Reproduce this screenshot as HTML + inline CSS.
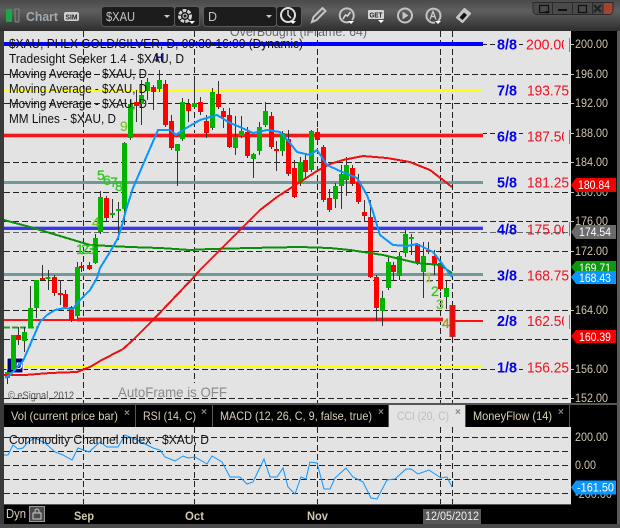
<!DOCTYPE html>
<html><head><meta charset="utf-8"><title>Chart</title>
<style>html,body{margin:0;padding:0;background:#333;width:620px;height:528px;overflow:hidden}svg{display:block}
text{font-family:"Liberation Sans",sans-serif}</style></head><body>
<svg width="620" height="528" viewBox="0 0 620 528" xmlns="http://www.w3.org/2000/svg">
<defs>
<linearGradient id="tb" x1="0" y1="0" x2="0" y2="1"><stop offset="0" stop-color="#4a4a4a"/><stop offset=".35" stop-color="#5e5e5e"/><stop offset="1" stop-color="#2e2e2e"/></linearGradient>
<clipPath id="lc"><rect x="520" y="30" width="44" height="340"/></clipPath>
</defs>
<rect width="620" height="528" fill="#3a3a3a"/>
<!-- main chart -->
<rect x="4" y="31" width="567" height="372" fill="#e3e3e3"/>
<text x="230" y="36" font-size="13" fill="#667" textLength="137" lengthAdjust="spacingAndGlyphs">OverBought (iFrame: 64)</text>
<!-- grid -->
<g stroke="#222" stroke-width="1" stroke-dasharray="6 3" fill="none" shape-rendering="crispEdges">
<path d="M4 44.500H571M4 74.500H571M4 103.500H571M4 133.500H571M4 162.500H571M4 192.500H571M4 221.500H571M4 251.500H571M4 280.500H571M4 310.500H571M4 339.500H571M4 369.500H571M4 398.500H571"/>
<path d="M4 232.500H571" stroke="#666"/>
<path d="M83.500 31V403M194.500 31V383M317.500 31V403M440.500 31V403M452.500 31V403"/>
</g>
<!-- label backgrounds masking grid -->
<g fill="#e3e3e3" shape-rendering="crispEdges">
<rect x="495" y="38" width="24" height="13"/><rect x="523" y="38" width="46" height="13"/>
<rect x="495" y="130" width="24" height="13"/><rect x="523" y="130" width="46" height="13"/>
<rect x="495" y="275" width="24" height="7"/><rect x="525" y="275" width="44" height="7"/>
<rect x="495" y="362" width="24" height="12"/><rect x="525" y="362" width="44" height="12"/>
</g>
<!-- level lines -->
<g shape-rendering="crispEdges">
<rect x="4" y="42" width="479" height="4" fill="#0000ff"/>
<rect x="4" y="89" width="478" height="2" fill="#ffff00"/>
<rect x="4" y="133" width="479" height="5" fill="#ff9a9a"/><rect x="4" y="134" width="479" height="3" fill="#f01818"/>
<rect x="4" y="181" width="479" height="3" fill="#6f9a9a"/>
<rect x="4" y="227" width="479" height="3" fill="#3838e8"/><rect x="4" y="226" width="479" height="1" fill="#a8a8e8"/>
<rect x="4" y="273" width="479" height="3" fill="#6f9a9a"/>
<rect x="4" y="319" width="73" height="2" fill="#ff1010"/>
<rect x="77" y="317" width="366" height="5" fill="#ff8a8a"/><rect x="77" y="318" width="366" height="3" fill="#f01818"/>
<rect x="455" y="320" width="28" height="2" fill="#ff1010"/>
<rect x="4" y="366" width="478" height="2" fill="#ffff00"/>
<path d="M4 327.500H37" stroke="#2a9a2a" stroke-width="2" stroke-dasharray="6 2" fill="none"/>
</g>
<!-- navy box -->
<rect x="7" y="358" width="16" height="15" fill="#000080" stroke="#fff" stroke-width="1"/>
<text x="16" y="369" font-size="9" font-weight="bold" fill="#fff">D</text>
<!-- wicks -->
<path shape-rendering="crispEdges" stroke="#333" stroke-width="1" fill="none" d="M7.500 370V384M18.500 327V345M24.500 327V352M30.500 286V328M36.500 280V318M42.500 265V280M48.500 270V290M54.500 275V296M60.500 280V305M65.500 290V307M71.500 306V322M77.500 262V318M81.500 262V272M89.500 262V270M95.500 234V264M100.500 191V234M106.500 196V222M112.500 199V218M118.500 202V240M124.500 142V225M130.500 100V140M136.500 90V122M141.500 80V125M147.500 78V100M153.500 85V110M159.500 70V92M165.500 80V127M171.500 115V150M177.500 144V186M182.500 98V141M188.500 99V122M194.500 80V107M200.500 97V115M206.500 115V138M212.500 88V130M218.500 81V109M223.500 108V128M229.500 108V148M235.500 116V155M241.500 116V138M247.500 127V158M253.500 153V178M259.500 122V155M265.500 102V127M271.500 112V149M276.500 141V171M282.500 131V156M288.500 130V176M294.500 160V198M300.500 157V186M305.500 155V178M311.500 130V172M317.500 128V143M323.500 145V202M329.500 189V212M335.500 183V208M341.500 165V209M346.500 157V196M352.500 165V186M358.500 174V204M364.500 200V222M370.500 200V278M376.500 275V321M382.500 291V326M388.500 256V290M393.500 262V280M399.500 252V280M405.500 230V257M411.500 234V255M417.500 243V265M423.500 242V298M428.500 242V254M434.500 250V275M440.500 260V291M446.500 281V309"/>
<!-- green bodies -->
<path shape-rendering="crispEdges" stroke="#00b400" stroke-width="5" fill="none" d="M7.500 372V378M13.500 335V370M24.500 332V341M30.500 308V328M36.500 280V308M48 277V279M77.500 267V316M95.500 238V263M100.500 197V232M112.500 213V215M118.500 209V211M124.500 143V209M130.500 104V138M141.500 95V104M147.500 82V91M159.500 80V89M177.500 144V151M182.500 102V139M194.500 103V107M212.500 92V128M235.500 137V148M241.500 131V136M253.500 154V159M259.500 127V151M265.500 111V125M282.500 133V151M300.500 162V183M311.500 131V170M335.500 186V199M341.500 174V186M346.500 165V180M382.500 298V311M388.500 262V288M399.500 256V276M405.500 234V253M411.500 237V239M423.500 256V272M446.500 288V297"/>
<!-- red bodies -->
<path shape-rendering="crispEdges" stroke="#ff0000" stroke-width="5" fill="none" d="M18.500 335V340M42.500 278V280M54.500 277V293M60.500 293V295M65.500 294V307M71.500 307V319M81.500 266V268M89.500 265V269M106.500 198V218M136.500 102V106M153.500 87V92M165.500 84V125M171.500 121V148M188.500 104V111M200.500 102V112M206.500 121V133M218.500 94V107M223.500 111V117M229.500 115V147M247.500 132V156M271.500 116V147M276.500 149V151M288.500 139V174M294.500 168V197M305.500 160V172M317.500 132V140M323.500 147V200M329.500 198V210M352.500 168V184M358.500 182V202M364.500 212V216M370.500 217V277M376.500 277V308M393.500 265V272M417.500 244V263M428.500 250V252M434.500 256V264M440.500 263V289"/>
<rect x="450" y="305.500" width="5" height="31" fill="#f00" stroke="#b03030" stroke-width="1" shape-rendering="crispEdges"/>
<!-- MAs -->
<path shape-rendering="crispEdges" fill="none" stroke="#0a8f0a" stroke-width="2" d="M4 220L30 227L50 233L80 242L90 245L110 246L130 247L160 248L190 250L210 249L250 248L300 247L330 248L350 250L383 255L417 263L440 265L452 273"/>
<path shape-rendering="crispEdges" fill="none" stroke="#f01010" stroke-width="2" d="M4 375L25 375L50 373L77 372L90 367L100 361L123 349L133 340L153 320L173 299L193 278L200 270L230 240L260 210L277 197L300 182L317 171L330 164L343 160L363 156L387 158L410 162L430 170L452 187"/>
<path shape-rendering="crispEdges" fill="none" stroke="#0a96ff" stroke-width="2" d="M5 378L10 375L23 361L30 345L40 322L47 315L55 310L65 308L73 309L80 300L90 290L97 278L100 268L110 252L118 238L122 225L126 210L133 188L145 160L158 130L170 130L176 135L183 130L200 120L217 115L230 123L240 127L253 133L267 130L280 132L290 143L297 152L310 155L317 150L327 165L340 171L357 178L367 195L373 212L380 235L393 245L407 246L417 244L433 252L443 265L452 277"/>
<!-- seq numbers -->
<g font-size="14" fill="#2fc81e" stroke="#2fc81e" stroke-width=".3">
<text x="97" y="180">5</text><text x="103" y="185">6</text><text x="110" y="187">7</text><text x="115" y="191">8</text>
<text x="92" y="227" fill="#70c820" stroke="#70c820">4</text><text x="76" y="254">1</text><text x="81" y="254">2</text><text x="87" y="254">3</text>
<text x="120" y="131" fill="#78c828" stroke="#78c828">9</text>
<text x="425" y="282" fill="#b0c840" stroke="#b0c840">1</text><text x="431" y="296">2</text><text x="436" y="309" fill="#70c030" stroke="#70c030">3</text><text x="442" y="328" fill="#9a9a10" stroke="#9a9a10">4</text>
</g>
<text x="155" y="62" font-size="13" font-weight="bold" fill="#202090">H</text>
<!-- legend -->
<g font-size="12.500" fill="#111">
<text x="9" y="48" textLength="294" lengthAdjust="spacingAndGlyphs">$XAU, PHLX GOLD/SILVER, D, 09:30-16:00 (Dynamic)</text>
<text x="9" y="63" textLength="175" lengthAdjust="spacingAndGlyphs">Tradesight Seeker 1.4 - $XAU, D</text>
<text x="9" y="78" textLength="138" lengthAdjust="spacingAndGlyphs">Moving Average - $XAU, D</text>
<text x="9" y="93" textLength="138" lengthAdjust="spacingAndGlyphs">Moving Average - $XAU, D</text>
<text x="9" y="108" textLength="138" lengthAdjust="spacingAndGlyphs">Moving Average - $XAU, D</text>
<text x="9" y="123" textLength="107" lengthAdjust="spacingAndGlyphs">MM Lines - $XAU, D</text>
</g>
<text x="8" y="399" font-size="11" fill="#555" textLength="66" lengthAdjust="spacingAndGlyphs">© eSignal, 2012</text>
<text x="118" y="397" font-size="14" fill="#8a8a8a" textLength="109" lengthAdjust="spacingAndGlyphs">AutoFrame is OFF</text>
<!-- level labels -->
<g font-size="15" font-weight="bold" fill="#0000ee">
<text x="497" y="49.500" textLength="20" lengthAdjust="spacingAndGlyphs">8/8</text><text x="497" y="95.500" textLength="20" lengthAdjust="spacingAndGlyphs">7/8</text><text x="497" y="141.500" textLength="20" lengthAdjust="spacingAndGlyphs">6/8</text><text x="497" y="187.500" textLength="20" lengthAdjust="spacingAndGlyphs">5/8</text><text x="497" y="234.500" textLength="20" lengthAdjust="spacingAndGlyphs">4/8</text><text x="497" y="280.500" textLength="20" lengthAdjust="spacingAndGlyphs">3/8</text><text x="497" y="326" textLength="20" lengthAdjust="spacingAndGlyphs">2/8</text><text x="497" y="372.500" textLength="20" lengthAdjust="spacingAndGlyphs">1/8</text>
</g>
<g font-size="15" fill="#f01020">
<text x="526" y="49.500" clip-path="url(#lc)" textLength="43" lengthAdjust="spacingAndGlyphs">200.00</text><text x="527" y="95.500" textLength="42" lengthAdjust="spacingAndGlyphs">193.75</text><text x="527" y="141.500" clip-path="url(#lc)" textLength="42" lengthAdjust="spacingAndGlyphs">187.50</text><text x="527" y="187.500" textLength="42" lengthAdjust="spacingAndGlyphs">181.25</text><text x="527" y="234.500" clip-path="url(#lc)" textLength="42" lengthAdjust="spacingAndGlyphs">175.00</text><text x="527" y="280.500" textLength="42" lengthAdjust="spacingAndGlyphs">168.75</text><text x="527" y="326" clip-path="url(#lc)" textLength="42" lengthAdjust="spacingAndGlyphs">162.50</text><text x="527" y="372.500" textLength="42" lengthAdjust="spacingAndGlyphs">156.25</text>
</g>
<g fill="#b08020" shape-rendering="crispEdges"><rect x="569" y="38" width="1" height="14"/><rect x="569" y="130" width="1" height="14"/><rect x="569" y="222" width="1" height="14"/><rect x="569" y="315" width="1" height="14"/></g>
<!-- right axis -->
<rect x="571" y="31" width="46" height="372" fill="#000"/>
<g font-size="11.500" fill="#cfc6ae">
<text x="575" y="48" textLength="33" lengthAdjust="spacingAndGlyphs">200.00</text><text x="575" y="78" textLength="33" lengthAdjust="spacingAndGlyphs">196.00</text><text x="575" y="107" textLength="33" lengthAdjust="spacingAndGlyphs">192.00</text><text x="575" y="137" textLength="33" lengthAdjust="spacingAndGlyphs">188.00</text><text x="575" y="166" textLength="33" lengthAdjust="spacingAndGlyphs">184.00</text><text x="575" y="196" textLength="33" lengthAdjust="spacingAndGlyphs">180.00</text><text x="575" y="225" textLength="33" lengthAdjust="spacingAndGlyphs">176.00</text><text x="575" y="255" textLength="33" lengthAdjust="spacingAndGlyphs">172.00</text><text x="575" y="314" textLength="33" lengthAdjust="spacingAndGlyphs">164.00</text><text x="575" y="373" textLength="33" lengthAdjust="spacingAndGlyphs">156.00</text><text x="575" y="402" textLength="33" lengthAdjust="spacingAndGlyphs">152.00</text>
</g>
<path stroke="#cfc6ae" d="M571 44.500h3M571 74.500h3M571 103.500h3M571 133.500h3M571 162.500h3M571 192.500h3M571 221.500h3M571 251.500h3M571 310.500h3M571 369.500h3M571 398.500h3" shape-rendering="crispEdges"/>
<!-- price tags -->
<path d="M571 185l5-7h40v14h-40z" fill="#f00000"/><text x="578" y="189" font-size="12" fill="#fff" textLength="32" lengthAdjust="spacingAndGlyphs">180.84</text>
<path d="M571 232l5-7h40v14h-40z" fill="#6a6a6a"/><text x="579" y="236" font-size="12" fill="#fff" textLength="32" lengthAdjust="spacingAndGlyphs">174.54</text>
<path d="M571 267l5-6h40v12h-40z" fill="#0a9a0a"/><text x="579" y="272" font-size="12" fill="#fff" textLength="32" lengthAdjust="spacingAndGlyphs">169.71</text>
<path d="M571 277l5-6h40v13h-40z" fill="#0a96ff"/><text x="579" y="282" font-size="12" fill="#fff" textLength="32" lengthAdjust="spacingAndGlyphs">168.43</text>
<path d="M571 336l5-6h40v13h-40z" fill="#f00000"/><text x="579" y="341" font-size="12" fill="#fff" textLength="32" lengthAdjust="spacingAndGlyphs">160.39</text>
<!-- tabs -->
<rect x="0" y="403" width="620" height="2" fill="#555"/>
<rect x="4" y="405" width="613" height="22" fill="#000"/>
<rect x="389" y="405" width="76" height="22" fill="#e3e3e3"/>
<g shape-rendering="crispEdges" fill="#555"><rect x="135" y="405" width="1" height="22"/><rect x="212" y="405" width="1" height="22"/><rect x="388" y="405" width="1" height="22"/><rect x="465" y="405" width="1" height="22"/><rect x="569" y="405" width="1" height="22"/></g>
<g font-size="12" fill="#d8cfb6">
<text x="11" y="420" textLength="107" lengthAdjust="spacingAndGlyphs">Vol (current price bar)</text>
<text x="143" y="420" textLength="53" lengthAdjust="spacingAndGlyphs">RSI (14, C)</text>
<text x="220" y="420" textLength="152" lengthAdjust="spacingAndGlyphs">MACD (12, 26, C, 9, false, true)</text>
<text x="473" y="420" textLength="79" lengthAdjust="spacingAndGlyphs">MoneyFlow (14)</text>
</g>
<text x="397" y="420" font-size="12" fill="#bdbdbd" textLength="52" lengthAdjust="spacingAndGlyphs">CCI (20, C)</text>
<g font-size="10" font-weight="bold" fill="#888">
<text x="124" y="416">×</text><text x="201" y="415">×</text><text x="378" y="415">×</text><text x="455" y="415">×</text><text x="558" y="415">×</text>
</g>
<!-- CCI panel -->
<rect x="4" y="427" width="567" height="78" fill="#e3e3e3"/>
<g stroke="#222" stroke-dasharray="6 3" fill="none" shape-rendering="crispEdges">
<path d="M4 437.500H571M4 451.500H571M4 465.500H571M4 479.500H571M4 493.500H571"/>
<path d="M83.500 427V505M194.500 427V505M317.500 427V505M440.500 427V505M452.500 427V505"/>
</g>
<path fill="none" stroke="#0a96ff" stroke-width="1" d="M4 455L8 455L13 445L18 449L23 448L28 442L35 438L45 443L55 452L63 455L72 460L78 448L89 452L100 442L107 447L118 447L125 435L137 440L143 443L153 448L160 450L165 457L175 461L183 456L188 458L195 457L207 464L212 456L222 462L230 477L240 477L247 484L253 482L264 459L270 477L277 477L283 468L288 487L295 494L301 477L306 479L310 462L317 463L324 489L330 489L335 478L346 468L353 477L363 482L371 498L377 499L387 480L395 479L406 469L411 469L418 474L429 470L441 478L447 477L452 487"/>
<text x="9" y="444" font-size="12.500" fill="#111" textLength="200" lengthAdjust="spacingAndGlyphs">Commodity Channel Index - $XAU, D</text>
<rect x="571" y="427" width="46" height="78" fill="#000"/>
<g font-size="11.500" fill="#cfc6ae"><text x="575" y="441" textLength="33" lengthAdjust="spacingAndGlyphs">200.00</text><text x="575" y="469" textLength="21" lengthAdjust="spacingAndGlyphs">0.00</text><text x="575" y="498" textLength="37" lengthAdjust="spacingAndGlyphs">-200.00</text></g>
<path d="M571 487.500l5-7h40v14h-40z" fill="#0a96ff"/><text x="577" y="491.500" font-size="12" fill="#fff" textLength="37" lengthAdjust="spacingAndGlyphs">-161.50</text>
<!-- x axis -->
<rect x="4" y="505" width="613" height="19" fill="#000"/>
<rect x="4" y="504" width="567" height="1" fill="#555"/>
<text x="6" y="518" font-size="12.500" fill="#d8cfb6" textLength="20" lengthAdjust="spacingAndGlyphs">Dyn</text>
<rect x="29.500" y="506.500" width="15" height="15" fill="#4a4a4a" stroke="#999"/>
<path d="M33 519v-6h8v6zM35 513v-2a2 2 0 0 1 4 0v2" fill="none" stroke="#ccc"/>
<g font-size="11.500" font-weight="bold" fill="#cfc6ae"><text x="74" y="520" textLength="20" lengthAdjust="spacingAndGlyphs">Sep</text><text x="185" y="520" textLength="19" lengthAdjust="spacingAndGlyphs">Oct</text><text x="307" y="520" textLength="21" lengthAdjust="spacingAndGlyphs">Nov</text></g>
<rect x="423" y="509" width="58" height="15" fill="#585858"/>
<text x="425" y="520" font-size="12" fill="#eee" textLength="54" lengthAdjust="spacingAndGlyphs">12/05/2012</text>
<!-- toolbar -->
<rect x="0" y="0" width="620" height="31" fill="url(#tb)"/>
<rect x="6" y="9" width="6" height="13" rx="1" fill="#1ea34f"/>
<rect x="15" y="9" width="4" height="13" rx="1" fill="#555" stroke="#888"/>
<text x="26" y="21" font-size="13" font-weight="bold" fill="#a2a9ae" textLength="32" lengthAdjust="spacingAndGlyphs">Chart</text>
<rect x="64" y="12" width="15" height="9" rx="2" fill="#cfcfcf"/>
<text x="65.500" y="19.500" font-size="7" font-weight="bold" fill="#222" textLength="12" lengthAdjust="spacingAndGlyphs">SIM</text>
<g fill="#1c1c1c" stroke="#5a5a5a">
<rect x="101.500" y="6.500" width="73" height="20" rx="3"/>
<rect x="174.500" y="6.500" width="25" height="20" rx="3"/>
<rect x="203.500" y="6.500" width="73" height="20" rx="3"/>
<rect x="276.500" y="6.500" width="25" height="20" rx="3"/>
</g>
<text x="106" y="21" font-size="12.500" fill="#c4c4c4" textLength="29" lengthAdjust="spacingAndGlyphs">$XAU</text>
<text x="208" y="21" font-size="12.500" fill="#c4c4c4">D</text>
<path d="M164 15h6l-3 3zM266 15h6l-3 3z" fill="#ccc"/>
<!-- gear & clock -->
<circle cx="185" cy="16" r="5.500" fill="none" stroke="#d4d4d4" stroke-width="3" stroke-dasharray="3.500 1.200"/><circle cx="185" cy="16" r="2" fill="none" stroke="#d4d4d4"/>
<path d="M189 21h6l-3 3z" fill="#fff"/>
<circle cx="288" cy="15" r="7" fill="none" stroke="#ddd" stroke-width="2"/><path d="M288 10v5l3 3" fill="none" stroke="#ddd" stroke-width="1.500"/>
<path d="M290 21h6l-3 3z" fill="#fff"/>
<!-- tool icons -->
<g fill="none" stroke="#c4c4c4" stroke-width="2">
<path d="M312 22l1.500-5 9-9 3 3-9 9z"/>
<path d="M352 20a7 7 0 1 0-3 2"/><path d="M343 19l2.500-4 2 1 3-4" stroke="#ddd" stroke-width="1.500"/>
<circle cx="405" cy="15.500" r="7"/>
<path d="M438 21a7 7 0 1 0-3 1.500"/>
</g>
<path d="M402.500 11.500v8l6-4z" fill="#c4c4c4"/>
<path d="M348 21h6l-3 3zM378 20h6l-3 3zM435 21h6l-3 3z" fill="#fff"/>
<rect x="368" y="10" width="16" height="9" rx="1" fill="#d4d4d4"/><text x="369.500" y="17.500" font-size="7.500" font-weight="bold" fill="#222" textLength="13" lengthAdjust="spacingAndGlyphs">GET</text>
<path d="M430 19.500l3-8 3 8M431 16.500h4" fill="none" stroke="#ccc" stroke-width="1.300"/>
<path d="M456 17l8-9 1 0 6 5 0 1-8 9-1 0-6-5z" fill="#c4c4c4"/><path d="M459.500 17.500l4.500-5 3 2.500-4.500 5z" fill="#111"/>
<!-- window buttons -->
<path d="M533 2.500h80v8a4 4 0 0 1-4 4h-72a4 4 0 0 1-4-4z" fill="#4a4a4a" stroke="#2a2a2a"/>
<path d="M603 3h9.500v8a3 3 0 0 1-3 3h-6.500z" fill="#a34433"/>
<path d="M552.500 3v11M572.500 3v11M592.500 3v11M603 3v11" stroke="#2a2a2a" shape-rendering="crispEdges"/>
<rect x="539.500" y="5.500" width="9" height="7" fill="none" stroke="#111" stroke-width="1.300"/><path d="M545 11h5l-2.500 3z" fill="#111"/>
<rect x="558" y="9" width="9" height="2" fill="#111"/>
<rect x="578.500" y="5.500" width="8" height="7" fill="none" stroke="#111" stroke-width="1.300"/>
<path d="M594 5l7 7M601 5l-7 7" stroke="#222" stroke-width="2.200"/>
<!-- borders -->
<rect x="0" y="31" width="4" height="497" fill="#3a3a3a"/>
<rect x="617" y="31" width="3" height="497" fill="#5a5a5a"/>
<rect x="0" y="524" width="620" height="4" fill="#4a4a4a"/>
</svg>
</body></html>
